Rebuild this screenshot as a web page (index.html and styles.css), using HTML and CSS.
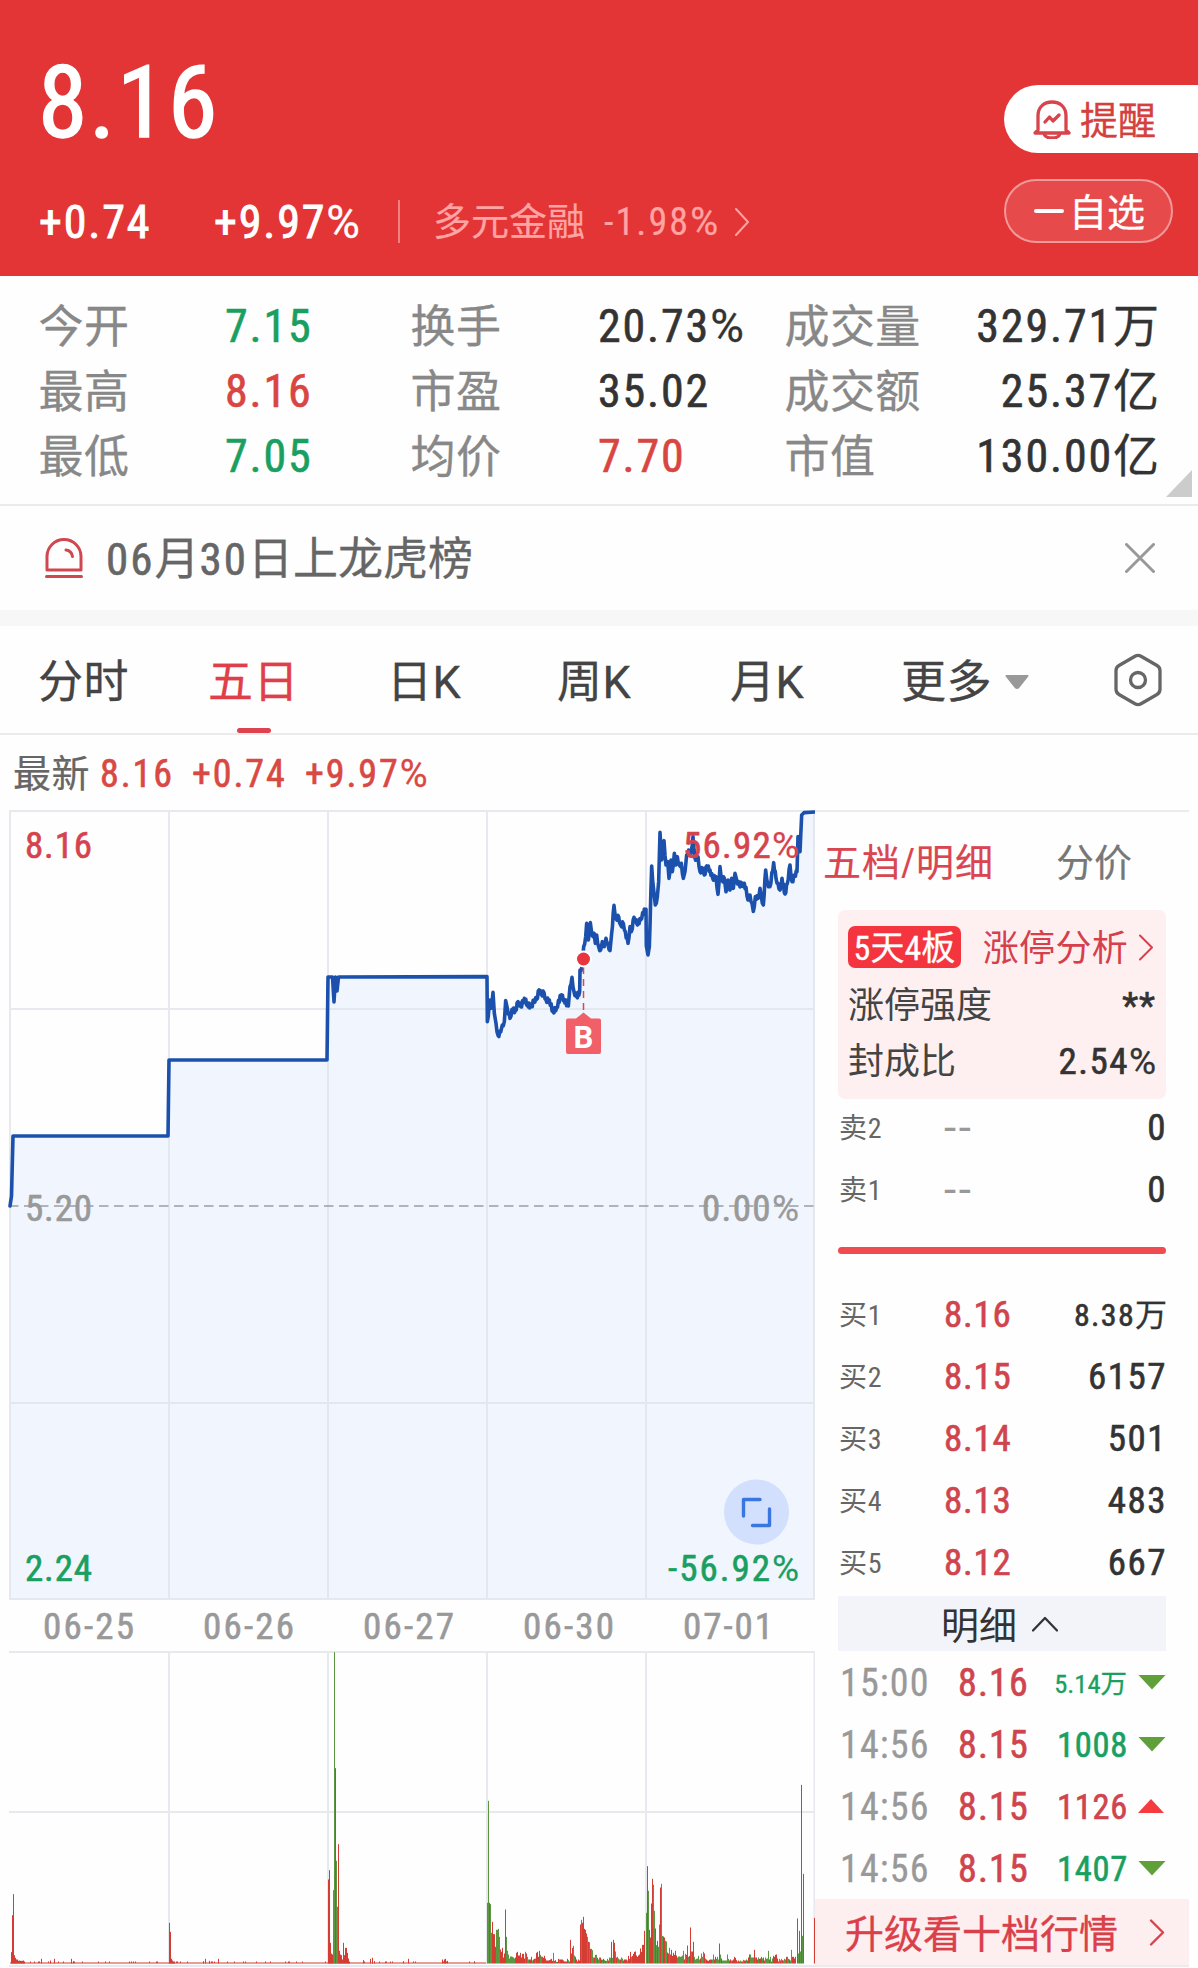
FILE: index.html
```html
<!DOCTYPE html>
<html lang="zh-CN">
<head>
<meta charset="utf-8">
<title>五日行情</title>
<link rel="stylesheet" href="styles.css">
</head>
<body>
<header class="quote">
  <div class="quote-main">
    <div class="price n">8.16</div>
    <div class="change">
      <span class="n">+0.74</span>
      <span class="n">+9.97<span class="pc">%</span></span>
      <i class="divider"></i>
      <span class="sector">多元金融</span>
      <span class="sector n">-1.98<span class="pc">%</span></span>
      <svg class="sector-arrow" width="16" height="28" viewBox="0 0 16 28"><path d="M2 1l12 13L2 27"/></svg>
    </div>
  </div>
  <div class="quote-actions">
    <div class="btn-alert">
      <svg width="38" height="40" viewBox="0 0 38 40"><path d="M5 31V17C5 8 11 3 19 3s14 5 14 14v14l3 3H2l3-3zM11 35c1 3 5 4 8 4s7-1 8-4M12 23l4.500-5 3.500 4 6-6"/></svg>
      <span>提醒</span>
    </div>
    <div class="btn-watch"><i></i><span>自选</span></div>
  </div>
</header>

<section class="stats">
  <span class="k">今开</span><span class="n down">7.15</span><span class="k">换手</span><span class="n">20.73<span class="pc">%</span></span><span class="k">成交量</span><span class="n r">329.71<span class="unit">万</span></span>
  <span class="k">最高</span><span class="n up">8.16</span><span class="k">市盈</span><span class="n">35.02</span><span class="k">成交额</span><span class="n r">25.37<span class="unit">亿</span></span>
  <span class="k">最低</span><span class="n down">7.05</span><span class="k">均价</span><span class="n up">7.70</span><span class="k">市值</span><span class="n r">130.00<span class="unit">亿</span></span>
  <i class="corner"></i>
</section>

<section class="notice">
  <svg width="38" height="42" viewBox="0 0 38 42"><path d="M2 33V19.500a17 17 0 0 1 34 0V33z"/><path d="M1.500 39.500h35M21 13c3.500.500 6 3 6.500 6.500"/></svg>
  <span class="notice-text"><b>06</b>月<b>30</b>日上龙虎榜</span>
  <svg class="close" width="30" height="30" viewBox="0 0 30 30"><path d="M1.500 1.500l27 27M28.500 1.500l-27 27"/></svg>
</section>

<nav class="tabs">
  <span>分时</span><span class="active">五日</span><span>日K</span><span>周K</span><span>月K</span>
  <span class="more">更多<svg width="24" height="15" viewBox="0 0 22 15" preserveAspectRatio="none"><path d="M1.500 0h19q2 0 .5 2l-8 11q-2 2-4 0L1 2Q-.5 0 1.500 0z"/></svg></span>
  <svg class="gear" width="50" height="54" viewBox="0 0 50 54"><path d="M22 3.200q3-1.700 6 0l16 9.300q3 1.700 3 5.200v18.600q0 3.500-3 5.200L28 50.800q-3 1.700-6 0L6 41.500q-3-1.700-3-5.200V17.700q0-3.500 3-5.200z"/><circle cx="25" cy="27" r="7.500"/></svg>
</nav>

<div class="latest"><span class="tag">最新</span><span class="n">8.16</span><span class="n">+0.74</span><span class="n">+9.97<span class="pc">%</span></span></div>

<main class="board">
  <svg class="chart" width="815" height="1158" viewBox="0 810 815 1158">
    <polygon id="area" class="area"/>
    <path class="grid" d="M10 811V1600M169 811V1600M328 811V1600M487 811V1600M646 811V1600M814 811V1600M9 811H815M9 1009H815M9 1403H815M9 1599H815"/>
    <path class="mid" d="M9 1206H814"/>
    <path class="grid" d="M169 1652V1964M328 1652V1964M487 1652V1964M646 1652V1964M814.500 1652V1964M9 1652H815M9 1812H815M9 1966H815"/>
    <polyline id="line" class="line"/>
    <path class="trade-link" d="M583.500 967V1012"/>
    <circle cx="583.500" cy="959" r="8.500" fill="#fff"/>
    <circle cx="583.500" cy="959" r="6.500" fill="#ea3440"/>
    <path d="M568 1018.500h8l7.500-6 7.500 6h8q2 0 2 2v31.500q0 2-2 2h-31q-2 0-2-2v-31.500q0-2 2-2z" fill="#f15f69"/>
    <text class="trade-tag" x="583.500" y="1048" text-anchor="middle">B</text>
    <circle cx="756.500" cy="1512" r="32.500" fill="#d2e0fd"/>
    <path class="expand" d="M743.500 1516V1499.500H760M752.500 1525.500H769.500V1509"/>
    <g class="label">
      <text x="25" y="858" textLength="67" fill="#d5434d" stroke="#d5434d">8.16</text>
      <text x="683" y="858" textLength="116" fill="#d5434d" stroke="#d5434d">56.92<tspan class="pc">%</tspan></text>
      <text x="25" y="1221" textLength="67" fill="#999" stroke="#999">5.20</text>
      <text x="702" y="1221" textLength="97" fill="#999" stroke="#999">0.00<tspan class="pc">%</tspan></text>
      <text x="25" y="1581" textLength="67" fill="#1a9f60" stroke="#1a9f60">2.24</text>
      <text x="668" y="1581" textLength="131" fill="#1a9f60" stroke="#1a9f60">-56.92<tspan class="pc">%</tspan></text>
      <text x="43" y="1639" textLength="91" fill="#999" stroke="#999">06-25</text>
      <text x="203" y="1639" textLength="91" fill="#999" stroke="#999">06-26</text>
      <text x="363" y="1639" textLength="91" fill="#999" stroke="#999">06-27</text>
      <text x="523" y="1639" textLength="91" fill="#999" stroke="#999">06-30</text>
      <text x="683" y="1639" textLength="90" fill="#999" stroke="#999">07-01</text>
    </g>
    <path id="vol-up" class="vol up-bar"/>
    <path id="vol-down" class="vol down-bar"/>
  </svg>

  <aside class="panel">
    <div class="panel-tabs"><span class="on">五档/明细</span><span>分价</span></div>
    <div class="card">
      <div class="card-row link"><span class="badge">5天4板</span><span>涨停分析</span><svg width="16" height="27" viewBox="0 0 16 27"><path d="M2 1.500l12 12-12 12"/></svg></div>
      <div class="card-row"><span>涨停强度</span><span class="n stars">**</span></div>
      <div class="card-row"><span>封成比</span><span class="n">2.54<span class="pc">%</span></span></div>
    </div>
    <div class="asks">
      <div class="level"><span>卖2</span><em class="dash">--</em><b class="n">0</b></div>
      <div class="level"><span>卖1</span><em class="dash">--</em><b class="n">0</b></div>
    </div>
    <div class="ratio"></div>
    <div class="bids">
      <div class="level"><span>买1</span><em class="n">8.16</em><b class="n small">8.38<i class="unit">万</i></b></div>
      <div class="level"><span>买2</span><em class="n">8.15</em><b class="n">6157</b></div>
      <div class="level"><span>买3</span><em class="n">8.14</em><b class="n">501</b></div>
      <div class="level"><span>买4</span><em class="n">8.13</em><b class="n">483</b></div>
      <div class="level"><span>买5</span><em class="n">8.12</em><b class="n">667</b></div>
    </div>
    <div class="detail-head"><span>明细</span><svg width="26" height="16" viewBox="0 0 26 16"><path d="M1 14.500L13 2l12 12.500"/></svg></div>
    <div class="ticks">
      <div class="tick sell"><time class="n">15:00</time><em class="n">8.16</em><b class="n tiny">5.14万</b><i></i></div>
      <div class="tick sell"><time class="n">14:56</time><em class="n">8.15</em><b class="n">1008</b><i></i></div>
      <div class="tick buy"><time class="n">14:56</time><em class="n">8.15</em><b class="n">1126</b><i></i></div>
      <div class="tick sell"><time class="n">14:56</time><em class="n">8.15</em><b class="n">1407</b><i></i></div>
    </div>
    <div class="upgrade"><span>升级看十档行情</span><svg width="16" height="27" viewBox="0 0 16 27"><path d="M2 1.500l12 12-12 12"/></svg></div>
  </aside>
</main>
<script src="script.js"></script>
</body>
</html>
```
FILE: styles.css
```css
* { box-sizing: border-box; }
body {
  margin: 0;
  width: 1198px;
  height: 1968px;
  overflow: hidden;
  background: #fefefe;
  color: #333;
  font-family: "Roboto Condensed", Roboto, "Noto Sans CJK SC", sans-serif;
  font-size: 45px;
  white-space: nowrap;
}
svg { display: block; flex: none; fill: none; stroke-linecap: round; stroke-linejoin: round; }
i, em { font-style: normal; }
.n { letter-spacing: .04em; font-weight: 400; -webkit-text-stroke: .6px currentColor; }
.pc { font-family: Roboto, sans-serif; font-weight: 400; letter-spacing: 0; -webkit-text-stroke-width: .3px; }
.unit { letter-spacing: 0; -webkit-text-stroke-width: .3px; }
.up { color: #d94540; }
.down { color: #1a9f60; }

.quote { display: flex; justify-content: space-between; height: 276px; background: #e33536; color: #fff; }
.quote-main { padding-left: 38px; }
.price { height: 200px; line-height: 206px; font-size: 100px; letter-spacing: .016em; -webkit-text-stroke-width: 1.600px; }
.change { display: grid; grid-template-columns: 175px 184px 35px 171px 130px auto; align-items: center; height: 42px; padding-left: 1px; line-height: 42px; font-size: 46px; }
.change .n { -webkit-text-stroke-width: .9px; }
.divider { width: 2px; height: 43px; background: #ee8080; }
.sector, .change .sector.n { font-size: 38px; color: #ffa3a3; -webkit-text-stroke-width: .2px; }
.change .sector.n { letter-spacing: .055em; }
.sector-arrow { stroke: #ffa3a3; stroke-width: 2; }
.quote-actions { width: 194px; padding-top: 85px; font-size: 38px; }
.btn-alert { display: flex; align-items: center; height: 68px; padding-left: 29px; gap: 9px; border-radius: 34px 0 0 34px; background: #fff; color: #d5403f; line-height: 38px; }
.btn-alert svg { stroke: #d8444c; stroke-width: 3.300; }
.btn-alert span, .btn-watch span { padding-top: 3px; -webkit-text-stroke: .3px; }
.btn-watch { display: flex; align-items: center; gap: 5px; width: 169px; height: 64px; margin-top: 26px; padding-left: 28px; border: 2px solid #f19a9b; border-radius: 32px; background: #e74a4b; line-height: 38px; }
.btn-watch i { width: 30px; height: 4px; border-radius: 2px; background: #fff; }

.stats { position: relative; display: grid; grid-template-columns: 185px 187px 186px 188px 150px 223px; grid-auto-rows: 65.300px; height: 230px; padding: 17.500px 0 0 40px; border-bottom: 2px solid #ebebeb; line-height: 65px; }
.stats .n { font-size: 46px; }
.stats .k { margin-left: -1.500px; color: #888; line-height: 68px; letter-spacing: .4px; -webkit-text-stroke: .3px; }
.stats .r { text-align: right; }
.corner { position: absolute; right: 6px; bottom: 7px; width: 26px; height: 27px; background: #ccc; clip-path: polygon(100% 0, 100% 100%, 0 100%); }

.notice { display: flex; align-items: center; height: 104px; padding: 0 43px 0 45px; color: #666; line-height: 60px; }
.notice svg { stroke: #cf4850; stroke-width: 3; }
.notice-text { flex: 1; margin-left: 23px; padding-top: 4px; -webkit-text-stroke: .3px; }
.notice-text b { font-weight: 400; letter-spacing: .045em; -webkit-text-stroke: .6px; }
.notice .close { stroke: #999; stroke-width: 3; }

.tabs { display: flex; align-items: center; height: 125px; border-top: 16px solid #f7f7f7; border-bottom: 2px solid #ebebeb; padding-left: 38px; color: #444; font-family: Roboto, "Noto Sans CJK SC", sans-serif; }
.tabs > span { width: 170px; height: 107px; line-height: 114px; letter-spacing: .4px; -webkit-text-stroke: .3px; }
.tabs > span:nth-child(3) { margin-left: 9px; }
.tabs > span:nth-child(4) { width: 173px; }
.tabs > span:nth-child(5) { width: 171px; }
.tabs .active { position: relative; color: #e03f4a; }
.tabs .active::after { content: ""; position: absolute; left: 29px; bottom: 0; width: 34px; height: 5px; border-radius: 3px; background: #dc434e; }
.tabs .more { display: flex; gap: 13px; width: 212px; }
.more svg { fill: #999; margin-top: 49px; }
.gear { stroke: #666; stroke-width: 3.300; }

.latest { display: flex; height: 75px; padding: 1px 0 0 13px; font-size: 38px; line-height: 77px; color: #d94843; }
.latest .tag { width: 87px; color: #666; letter-spacing: .4px; -webkit-text-stroke: .2px; }
.latest .n:nth-child(2) { width: 92px; }
.latest .n:nth-child(3) { width: 113px; }
.latest .n { letter-spacing: .05em; }

.board { display: flex; height: 1158px; }
.area { fill: #f0f5fe; }
.grid { stroke: #dfe2e8; stroke-opacity: .75; stroke-width: 2; stroke-linecap: butt; }
.mid { stroke: #9a9da3; stroke-width: 1.700; stroke-dasharray: 9.500 5.500; stroke-linecap: butt; }
.line { stroke: #1b51ad; stroke-width: 3.600; }
.trade-link { stroke: #e0425c; stroke-width: 1.500; stroke-dasharray: 7 5; stroke-linecap: butt; }
.trade-tag { fill: #fff; font: 700 31px Roboto, sans-serif; }
.expand { stroke: #3a76e0; stroke-width: 3.400; }
.label { font-size: 37px; font-weight: 400; stroke-width: .6px; }
.label .pc { stroke-width: .2px; }
.vol { stroke-width: 1; stroke-linecap: butt; }
.up-bar { stroke: #d33d33; }
.down-bar { stroke: #5b9740; }

.panel { width: 374px; border-top: 2px solid #ebebeb; }
.panel-tabs { display: flex; height: 98px; padding-left: 8px; line-height: 102px; font-size: 38px; color: #777; -webkit-text-stroke: .2px; }
.panel-tabs .on { width: 233px; color: #d94550; letter-spacing: 1px; }
.card { height: 189px; margin: 0 23px; padding: 9px 12px 0 10px; border-radius: 7px; background: #fef0f0; font-size: 36px; color: #444; line-height: 44px; }
.card-row { display: flex; justify-content: space-between; align-items: center; height: 56.500px; }
.card-row > span:not(.badge) { padding-top: 4px; }
.card-row > .n { font-size: 37px; color: #333; margin-right: -2px; }
.card-row > .stars { letter-spacing: 1px; font-family: Roboto, sans-serif; }
.link { color: #d63f4c; justify-content: flex-start; }
.link span:not(.badge) { letter-spacing: .3px; }
.badge { width: 115px; height: 42px; margin-right: 22px; border-radius: 7px; background: #f4343f; color: #fff; font: 400 34px/45px "Roboto Condensed", "Noto Sans CJK SC", sans-serif; text-align: center; -webkit-text-stroke: .3px; }
.link svg { stroke: #d63f4c; stroke-width: 2; margin-left: 10px; }
.asks { margin-top: -2px; }
.level { display: grid; grid-template-columns: 105px 101px 1fr; height: 62px; padding: 0 22px 0 24px; line-height: 62px; font-size: 37px; }
.level span { font-size: 28px; color: #666; letter-spacing: .03em; line-height: 63px; }
.level em { color: #cf444d; letter-spacing: .02em; }
.level .dash { color: #999; letter-spacing: 2.500px; font-family: Roboto, sans-serif; font-size: 44px; }
.level b { text-align: right; }
.level .small { font-size: 32px; }
.ratio { height: 7px; margin: 26px 23px 29.500px; border-radius: 4px; background: #ef4b51; }
.detail-head { display: flex; align-items: center; justify-content: center; gap: 15px; height: 55px; margin: 2.500px 23px 1px; padding-right: 5px; background: #f3f4f9; font-size: 38px; line-height: 46px; }
.detail-head span { padding-top: 4px; }
.detail-head svg { stroke: #333; stroke-width: 2.300; }
.tick { display: grid; grid-template-columns: 118px 80px 90px 40px; align-items: center; height: 62px; padding-left: 25px; line-height: 63px; font-size: 38px; }
.tick time { color: #999; letter-spacing: .03em; -webkit-text-stroke-width: .3px; }
.tick em { color: #cf444d; letter-spacing: .03em; }
.tick b { font-size: 34.500px; text-align: right; letter-spacing: .02em; }
.tick .tiny { font-size: 26.500px; letter-spacing: 0; padding-right: 1px; -webkit-text-stroke-width: .3px; }
.tick i { width: 28px; height: 15px; margin: 0 0 3px 10px; }
.sell b { color: #1a9f60; }
.sell i { background: #5fa03a; clip-path: polygon(0 0, 100% 0, 50% 100%); }
.buy b { color: #cf444d; }
.buy i { width: 26px; height: 14px; background: #f53b3d; clip-path: polygon(0 100%, 100% 100%, 50% 0); }
.upgrade { display: flex; align-items: center; justify-content: space-between; height: 68px; margin-top: -1px; padding: 0 24px 0 30px; border-bottom: 2px solid #ececec; background: #fdeeef; color: #d9404a; font-size: 39px; line-height: 50px; }
.upgrade span { padding-top: 5px; -webkit-text-stroke: .3px; }
.upgrade svg { stroke: #d9404a; stroke-width: 2.300; }
```
FILE: script.js
```js
// Price line. The first three sessions are plain; the last two are sampled
// on a fine scale (three units to a pixel) from the origin 470,800.
const early = [[10,1206],[11.500,1196],[13,1136],[168,1136],[169,1060],[327,1060],[328,977],[332.500,977],[334,1002],[335.500,977],[337,991],[338.500,977]];
const fine = `51,530 52,665 60,600 63,625 69,577 73,640 78,670 84,706 92,696 97,675 103,665 107,602 112,625 120,655 126,628 136,632 144,605
152,620 163,595 172,612 184,620 192,600 200,598 207,570 214,582 222,578 228,600 238,600 249,635 260,622 273,585 282,598 295,618 300,560 306,532
312,575 320,590 329,575 330,510 336,500 341,440 347,410 350,370 355,420 361,368 366,405 372,400 376,430 380,405 386,440 392,450 397,425 403,440
408,415 414,430 420,452 425,400 432,316 438,355 446,350 452,375 460,370 466,395 474,430 480,380 484,395 492,352 500,370 512,360 518,338 528,328
529,438 534,465 538,440 545,198 551,270 556,315 562,290 566,245 570,97 575,180 582,122 588,195 593,185 597,235 603,180 607,215 613,160 618,195
622,170 628,195 634,190 640,235 645,215 650,165 656,150 663,160 669,110 675,175 684,170 690,215 698,205 703,225 710,198 720,210 728,235 738,230
744,283 750,200 756,240 763,235 768,275 774,240 780,270 785,235 790,265 795,220 800,240 808,255 818,250 828,262 834,300 840,285 846,310 850,334
856,290 864,295 870,265 874,290 880,315 887,210 893,250 900,260 911,188 918,235 924,250 930,270 936,235 945,282 952,250 960,195 966,245 974,225
981,215 984,110 990,155 995,45 1002,38 1034,36`
  .split(/\s+/).map(p => p.split(',').map(Number));
// Minute-level flicker between the sampled turns.
const dense = [];
fine.forEach(([x, y], i) => {
  dense.push([x, y]);
  const next = fine[i + 1];
  if (next && x < 975 && next[0] - x > 5) {
    const steps = Math.round((next[0] - x) / 2.5);
    for (let s = 1; s < steps; s++) {
      const t = s / steps;
      dense.push([x + (next[0] - x) * t, y + (next[1] - y) * t + (s % 2 ? 7 : -6)]);
    }
  }
});
const points = early.concat(dense.map(([x, y]) => [470 + x / 3, 800 + y / 3]));
document.getElementById('line').setAttribute('points', points.join(' '));
document.getElementById('area').setAttribute('points', points.join(' ') + ' 814,1599 10,1599');

// Volume bars: one per pixel column, r = rise, g = fall, height in thirds of a pixel.
const paths = { r: '', g: '' };
const bar = (x, c, h) => { paths[c] += `M${x + .5} 1963.500v${-h / 3}`; };
const run = (x0, list) => list.trim().split(/\s+/).forEach((t, i) => bar(x0 + i, t[0], +t.slice(1)));
let seed = 7;
const rnd = () => (seed = (seed * 16807) % 2147483647) / 2147483647;
const quiet = (a, b) => { for (let x = a; x < b; x++) bar(x, 'r', rnd() > .9 ? 6 : 3); };

quiet(10, 168);
run(11, 'r34 r145 r208 r25 r17 r12 r12 r8 r9 r8 r8 r8 r9 r6');
[[41,14],[50,9],[54,14],[71,14],[73,7]].forEach(([x, h]) => bar(x, 'r', h));
quiet(168, 327);
run(169, 'r122 r95 r14 r9 r6 r6');
[[203,7],[205,14],[209,8],[218,14]].forEach(([x, h]) => bar(x, 'r', h));
quiet(327, 486);
run(328, 'r252 r280 r62 r30 r27 g220 g934 r586 g308 g170 r358 r38 r27 r25 r12 r62 r25 r47 r47 r32 r15 r6');
[[363,10],[370,14],[372,17],[374,7],[403,7],[408,14],[442,12],[444,12],[445,14],[447,8],[474,7]].forEach(([x, h]) => bar(x, 'r', h));
run(487, `g182 g488 r182 g178 g92 r125 r88 r88 r50 g101 g101 g104 g80 r42 r35 r47 r18 r30 r162 g80 g38 g27 g15 g21 g21 g20
g18 g15 r18 r32 r35 r24 r24 r32 r18 r29 r29 r15 g35 r30 g20 g12 r12 r12 r20 g9 r12 r14 g15 r32 r35 r20 r38 g26 g21 r20 r17 r23 r15 r9
r9 r9 r10 r12 r14 r8 g32 r8 r10 g5 r5 r14 g12 r12 r12 r12 r9 r6 r6 r6 r14 g10 r6 r71 r30 r47 g53 g24 r20 r12 r6 r12 r9
r117 g131 r122 r140 r104 r101 r90 g80 r65 g64 r44 g44 g40 g18 r18 g26 g26 r17 g12 g18 r18 r12 g11 r14 g11 r8 g8 g14 r9 g18 g17 r65 g17
r71 r62 g36 r18 g20 g15 g12 r12 g18 g15 r9 r12 r12 r12 g9 r23 r14 r35 g20 r23 r29 r35 r36 r24 r20 r24 r27 r45 r35 r56 r56 r98`);
run(646, `g152 r292 g218 r101 r78 r180 r254 g236 g158 r105 g55 r68 g50 g117 r228 g239 g83 r81 r78 g68 g66 r33 r30 g47 r27 r41 r23 r32 r26 r38
r24 g18 g21 g21 g20 g21 g24 g38 r12 g29 r26 r54 g20 r23 r108 g36 r36 r65 g20 g12 g14 g15 g23 g12 r15 g30 g20 g35 r30 g15 r12 r9 r8 r11 r12 r12 g12 g27 r12 r20
g14 g20 g12 r60 g27 r15 g9 g9 g9 g9 g9 g27 g14 r9 r12 g9 r9 r12 r20 r17 r10 g6 r9 r6 g9 r6 r6 g11 r9 r9 g12 r9 r18 r27 g27 g18 g18 g18 r41 g18 r18 r12
g18 r14 r15 r20 g15 r18 r9 g18 g14 g15 g38 r12 g20 r6 g15 r23 r20 r26 r27 r15 r6 g14 r9 g14 r10 g9 g14 g12 r20 g20 g14 r12 g9 g41 r20 r20 r15 r20`);
run(797, 'r135 g30 r98 g36 r536 g83 r269');
bar(814, 'r', 137);
document.getElementById('vol-up').setAttribute('d', paths.r);
document.getElementById('vol-down').setAttribute('d', paths.g);
```
